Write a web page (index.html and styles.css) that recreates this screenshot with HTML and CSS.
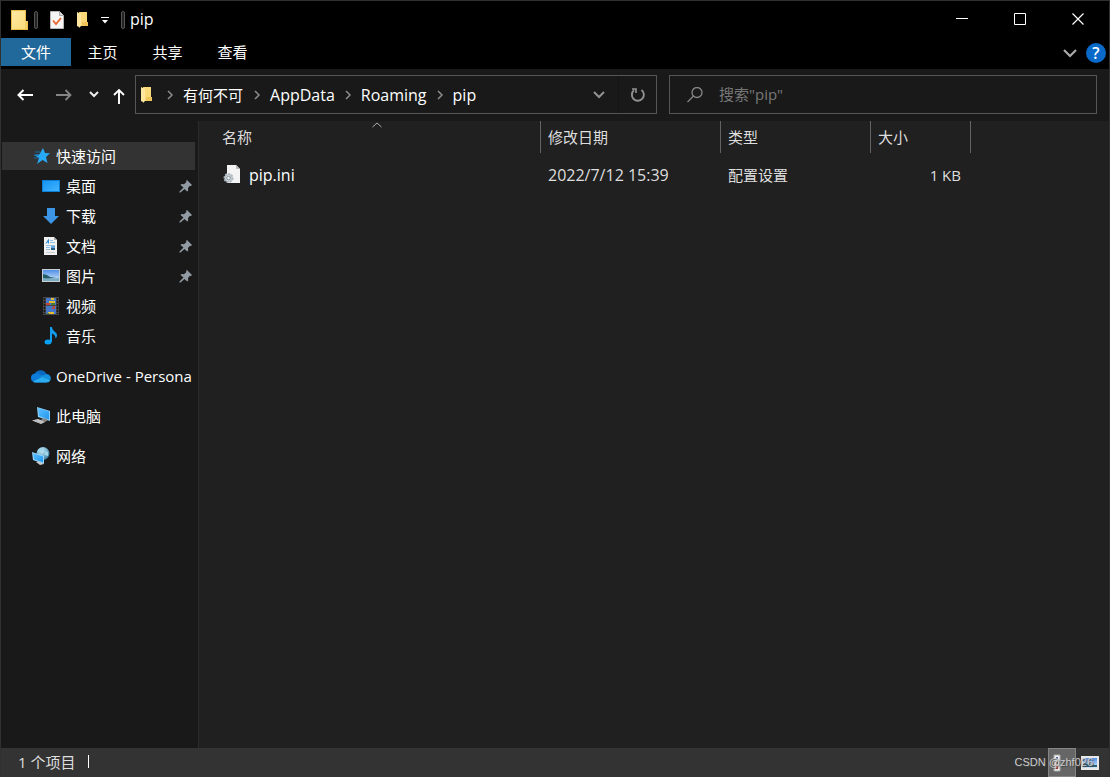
FILE: index.html
```html
<!DOCTYPE html>
<html lang="zh-CN">
<head>
<meta charset="utf-8">
<meta name="viewport" content="width=device-width, initial-scale=1">
<title>pip</title>
<link rel="stylesheet" href="styles.css">
</head>
<body>
<svg class="defs" aria-hidden="true">
  <defs>
    <linearGradient id="gold" x1="0" y1="0" x2="1" y2="1"><stop offset="0" stop-color="#ffe9a2"/><stop offset="1" stop-color="#fbdc7c"/></linearGradient>
    <linearGradient id="blue" x1="0" y1="0" x2="1" y2="1"><stop offset="0" stop-color="#1494f2"/><stop offset="1" stop-color="#42b4ff"/></linearGradient>
    <linearGradient id="screen" x1="0" y1="0" x2="1" y2="1"><stop offset="0" stop-color="#5cc0ff"/><stop offset="1" stop-color="#2196ee"/></linearGradient>
    <linearGradient id="sky" x1="0" y1="0" x2="0" y2="1"><stop offset="0" stop-color="#4f8fe8"/><stop offset="1" stop-color="#d5eafa"/></linearGradient>
    <radialGradient id="globe" cx=".4" cy=".3" r=".8"><stop offset="0" stop-color="#c8e8f4"/><stop offset=".5" stop-color="#79b4cf"/><stop offset="1" stop-color="#2b6c94"/></radialGradient>
    <symbol id="folder" viewBox="0 0 13 17"><path d="M3 1h8v10h1v4H3z" fill="#eec45b"/><path d="M4 1h7v10H6v4H4z" fill="#f9d978"/><path d="M1 1l4 2v12l-2 2v-1l-2-1z" fill="#ffe7a0"/></symbol>
    <symbol id="pin" viewBox="0 0 14 14"><path d="M8 1l5 5-1 1-1-.3-2 2.300.2 2.500-1 1L5.500 10 1.500 13.500.5 13.500.5 12.500 4.500 8.500 1.500 6l1-1L5 5.200 7.500 3 7 2z" fill="#929ba3"/></symbol>
    <symbol id="crumb" viewBox="0 0 8 10"><path d="M2 1l4 4-4 4" fill="none" stroke="#8c8c8c" stroke-width="1.500"/></symbol>
  </defs>
</svg>
<div class="window">
  <header class="titlebar">
    <svg class="app-icon" viewBox="0 0 18 20"><path d="M0 0h15v11h2v9H0z" fill="#e9bd46"/><path d="M1 1h13v18H1z" fill="url(#gold)"/><path d="M14 11h2v8h-2z" fill="#f5d068"/></svg>
    <span class="grip"></span>
    <button class="quick" aria-label="属性"><svg width="14" height="18" viewBox="0 0 14 18"><path d="M.5.5h9l4 4v13H.5z" fill="#f5f5f5" stroke="#b5b5b5"/><path d="M9.500.5v4h4" fill="#ddd" stroke="#aaa"/><path d="M3 9.500l3 3.500 5-6" fill="none" stroke="#e9662c" stroke-width="1.800"/></svg></button>
    <button class="quick" aria-label="新建文件夹"><svg width="13" height="17"><use href="#folder"/></svg></button>
    <button class="quick quick-more" aria-label="自定义快速访问工具栏"><svg width="8" height="8" viewBox="0 0 8 8"><path d="M0 1h8v1H0zM1 4h6L4 7.500z" fill="#fff"/></svg></button>
    <span class="grip"></span>
    <h1 class="title">pip</h1>
    <div class="controls">
      <button aria-label="最小化"><svg width="12" height="12" viewBox="0 0 12 12"><path d="M0 5.500h12" stroke="#fff"/></svg></button>
      <button aria-label="最大化"><svg width="12" height="12" viewBox="0 0 12 12"><path d="M.5.5h11v11H.5z" fill="none" stroke="#fff"/></svg></button>
      <button aria-label="关闭"><svg width="12" height="12" viewBox="0 0 12 12"><path d="M.5.5l11 11M11.500.5l-11 11" stroke="#fff" stroke-width="1.200"/></svg></button>
    </div>
  </header>
  <nav class="ribbon">
    <button class="tab tab-file">文件</button>
    <button class="tab">主页</button>
    <button class="tab">共享</button>
    <button class="tab">查看</button>
    <div class="ribbon-end">
      <button aria-label="展开功能区"><svg width="14" height="9" viewBox="0 0 14 9"><path d="M1 1l6 6 6-6" fill="none" stroke="#aaa" stroke-width="2.200"/></svg></button>
      <button class="help" aria-label="帮助">?</button>
    </div>
  </nav>
  <div class="toolbar">
    <div class="history">
      <button class="nav-side" aria-label="后退"><svg width="16" height="12" viewBox="0 0 16 12"><path d="M16 6H1.500M6.500 1l-5 5 5 5" fill="none" stroke="#fff" stroke-width="2"/></svg></button>
      <button class="nav-side" aria-label="前进"><svg width="16" height="12" viewBox="0 0 16 12"><path d="M0 6h14.500M9.500 1l5 5-5 5" fill="none" stroke="#858585" stroke-width="1.800"/></svg></button>
      <button class="nav-recent" aria-label="最近浏览的位置"><svg width="10" height="7" viewBox="0 0 10 7"><path d="M1 1l4 4 4-4" fill="none" stroke="#eee" stroke-width="2"/></svg></button>
      <button class="nav-up" aria-label="上移"><svg width="12" height="16" viewBox="0 0 12 16"><path d="M6 16V2M1 7l5-5 5 5" fill="none" stroke="#fff" stroke-width="1.900"/></svg></button>
    </div>
    <div class="address">
      <svg width="13" height="17"><use href="#folder"/></svg>
      <svg class="crumb crumb-first" width="8" height="10"><use href="#crumb"/></svg>
      <a class="cn" href="#home">有何不可</a>
      <svg class="crumb" width="8" height="10"><use href="#crumb"/></svg>
      <a href="#appdata">AppData</a>
      <svg class="crumb" width="8" height="10"><use href="#crumb"/></svg>
      <a href="#roaming">Roaming</a>
      <svg class="crumb" width="8" height="10"><use href="#crumb"/></svg>
      <a href="#pip">pip</a>
      <div class="address-end">
        <button class="addr-button" aria-label="以前的位置"><svg width="12" height="8" viewBox="0 0 12 8"><path d="M1 1l5 5 5-5" fill="none" stroke="#929292" stroke-width="2"/></svg></button>
        <button class="addr-button addr-refresh" aria-label="刷新"><svg width="16" height="16" viewBox="0 0 16 16"><path d="M11.500 3A6 6 0 1 1 4 3.200" fill="none" stroke="#929292" stroke-width="1.900"/><path d="M2 2h4v4" fill="none" stroke="#929292" stroke-width="1.600"/></svg></button>
      </div>
    </div>
    <label class="search">
      <svg width="16" height="16" viewBox="0 0 16 16"><circle cx="10" cy="5.500" r="5" fill="none" stroke="#858585" stroke-width="1.300"/><path d="M6.500 9L.5 15" stroke="#858585" stroke-width="1.300"/></svg>
      <input type="text" aria-label="搜索" placeholder='搜索"pip"'>
    </label>
  </div>
  <div class="body">
    <aside class="sidebar">
      <a class="item selected" href="#quick"><svg width="18" height="18" viewBox="0 0 18 18"><path d="M10 1l2 5 5 .3-4 3.700 1.500 6-5-3-5.500 4 2-6L1 8l5.500-.7z" fill="#27a9f5"/><path d="M2 5h5M1 8h5M1 11h4" stroke="#136ca5"/></svg>快速访问</a>
      <a class="item sub" href="#desktop"><svg width="18" height="18" viewBox="0 0 18 18"><path d="M0 3h18v12H0z" fill="#0d7ed5"/><path d="M1 4h16v10H1z" fill="url(#blue)"/></svg>桌面<svg class="pin" width="14" height="14"><use href="#pin"/></svg></a>
      <a class="item sub" href="#downloads"><svg width="18" height="18" viewBox="0 0 18 18"><path d="M5 1h8v8h4l-8 8-8-8h4z" fill="#3d96e5"/></svg>下载<svg class="pin" width="14" height="14"><use href="#pin"/></svg></a>
      <a class="item sub" href="#documents"><svg width="18" height="18" viewBox="0 0 18 18"><path d="M2 0h10l3 3v15H2z" fill="#f1f1f1"/><path d="M12 0v3h3" fill="#aaa"/><path d="M4 6.500l2.500-4v4M5 5h2" fill="none" stroke="#2f8bd0"/><path d="M8 3.500h3M8 5.500h5M4 8.500h9M4 10.500h4M4 12.500h4" stroke="#8fbfe6"/><path d="M4 15.500h9" stroke="#ccc"/><path d="M9 9h4v2H9z" fill="#64a5e2"/><path d="M9 11h4v2H9z" fill="#285f83"/></svg>文档<svg class="pin" width="14" height="14"><use href="#pin"/></svg></a>
      <a class="item sub" href="#pictures"><svg width="18" height="18" viewBox="0 0 18 18"><path d="M0 2h18v13H0z" fill="#c9ced0"/><path d="M1 3h16v11H1z" fill="url(#sky)"/><path d="M1 7l4 1 3 2 6 1-13 1z" fill="#245f68"/><path d="M1 11l6 1 10-1v3H1z" fill="#79abc2"/></svg>图片<svg class="pin" width="14" height="14"><use href="#pin"/></svg></a>
      <a class="item sub" href="#videos"><svg width="18" height="18" viewBox="0 0 18 18"><path d="M1 0h16v18H1z" fill="#484848"/><path d="M2.500 1v16M15.500 1v16" stroke="#151515" stroke-width="1.500" stroke-dasharray="2 1"/><path d="M4 1h10v7H4zM4 9h10v8H4z" fill="#4678ca"/><path d="M9 1h3v2H9zM7 4h6v2H7zM6 15h6v2H6z" fill="#e0bd35"/><path d="M4 6h4v2H4zM11 9h2v3h-3z" fill="#c0453a"/><path d="M9 6h4v2H9zM5 16h2v1H5z" fill="#4a7a3b"/></svg>视频</a>
      <a class="item sub" href="#music"><svg width="18" height="18" viewBox="0 0 18 18"><ellipse cx="6" cy="15" rx="3.500" ry="2.500" fill="#09a1f5"/><path d="M8 0h2c0 4 5 5 5 8 0 1.500-.5 2.500-1.500 3.500 0-3-1.500-4-3.500-5V15H8z" fill="#119ced"/></svg>音乐</a>
      <a class="item root" href="#onedrive"><svg width="20" height="18" viewBox="0 0 20 18"><path d="M4.500 15.500A4.500 4.500 0 0 1 4 6.500 6.500 6.500 0 0 1 15.500 7a4.500 4.500 0 0 1 0 8.500z" fill="#0a68c0"/><path d="M4.500 6.500c4-1 6 2 8 3l-9.500 5C-1 12 0 7 4.500 6.500z" fill="#0c7cd8"/><path d="M9 9.500l6.500-2.500a4.300 4.300 0 0 1 4 6z" fill="#1490df"/><path d="M2 14.500l9-4.500 8.500 3c-.8 1.700-2 2.500-4 2.500h-11c-1 0-2-.5-2.500-1z" fill="#2bacef"/></svg>OneDrive - Persona</a>
      <a class="item root" href="#computer"><svg width="20" height="20" viewBox="0 0 20 20"><path d="M6 1l13 4v10L7 11z" fill="#8ed2fb"/><path d="M7 2l11 3.500v8L8 10z" fill="url(#screen)"/><path d="M9 14l5-2 3 2-3 2z" fill="#888"/><path d="M1 14.500l6-1.500 7 3-4 2z" fill="#d4d4d4"/><path d="M3 14.500l7 2.500M5 14l7 2.500" stroke="#a2a2a2" stroke-width=".6"/></svg>此电脑</a>
      <a class="item root" href="#network"><svg width="20" height="20" viewBox="0 0 20 20"><circle cx="12" cy="7.500" r="6.500" fill="url(#globe)"/><path d="M7 4q3-3 6-2l-2 3-4 1zM14 5l3 1v4l-3-1z" fill="#a3d5e8"/><path d="M1 6l12 4v8L2 14z" fill="#9ad8fb"/><path d="M2 7.200l10 3.300v6L3 13.300z" fill="url(#screen)"/><path d="M5 16l3-.5 5 2.500-4 1z" fill="#ccc"/></svg>网络</a>
    </aside>
    <main class="content">
      <table class="files">
        <thead>
          <tr>
            <th class="col-name">名称<svg class="sort" width="10" height="6" viewBox="0 0 10 6"><path d="M.5 5L5 1l4.500 4" fill="none" stroke="#aaa"/></svg></th>
            <th class="col-date">修改日期</th>
            <th class="col-type">类型</th>
            <th class="col-size">大小</th>
            <td></td>
          </tr>
        </thead>
        <tbody>
          <tr>
            <td class="name"><div class="file"><svg width="18" height="20" viewBox="0 0 18 20"><path d="M4 0h9l4 4v14H4z" fill="#f4f4f4"/><path d="M13 0v4h4" fill="#b8bdc0"/><circle cx="5.500" cy="13" r="4" fill="#cbd3d8" stroke="#aab6bd" stroke-width="2" stroke-dasharray="2 1"/><circle cx="5.500" cy="13" r="1.800" fill="#edf1f2" stroke="#8b989f"/></svg><span class="latin">pip.ini</span></div></td>
            <td class="latin">2022/7/12 15:39</td>
            <td>配置设置</td>
            <td class="size">1 KB</td>
            <td></td>
          </tr>
        </tbody>
      </table>
    </main>
  </div>
  <footer class="status">
    <span class="count">1 个项目</span>
    <div class="views">
      <button class="view active" aria-label="详细信息"><svg width="8" height="18" viewBox="0 0 8 18"><path d="M1 1h6v16H1z" fill="#f0f0f0" stroke="#aaa"/><path d="M3 3h2v2H3z" fill="#496a9c"/><path d="M3 8h2v2H3z" fill="#555"/><path d="M3 12h2v3H3z" fill="#c42c2c"/></svg></button>
      <button class="view" aria-label="大缩略图"><svg width="18" height="14" viewBox="0 0 18 14"><path d="M0 0h18v14H0z" fill="#e8e8e8"/><path d="M2 2h14v10H2z" fill="url(#sky)"/><path d="M2 7l5 1 4 1h5v2H2z" fill="#285d78"/></svg></button>
    </div>
    <span class="watermark">CSDN @zhf026</span>
  </footer>
</div>
</body>
</html>
```
FILE: styles.css
```css
* { box-sizing: border-box; }
body {
  margin: 0;
  background: #191919;
  color: #fff;
  font: 15px/20px "Open Sans", "Noto Sans CJK SC", sans-serif;
}
button {
  display: flex;
  align-items: center;
  justify-content: center;
  padding: 0;
  border: 0;
  background: none;
  color: inherit;
  font: inherit;
}
a { color: inherit; text-decoration: none; }
svg { display: block; flex: none; }
.defs { position: absolute; width: 0; height: 0; }
.latin { font-size: 16px; }

.window {
  display: flex;
  flex-direction: column;
  min-height: 100vh;
  border: 1px solid #303030;
  border-bottom: 0;
}

.titlebar {
  display: flex;
  align-items: center;
  height: 37px;
  padding-left: 10px;
  background: #000;
}
.app-icon { width: 18px; height: 20px; margin-right: 5px; }
.grip {
  width: 4px;
  height: 18px;
  border: 1px solid #555;
  border-radius: 2px;
  background: #222;
}
.quick { margin-left: 12px; }
.quick-more { margin-right: 12px; }
.title { margin: 0 0 0 5px; padding-bottom: 2px; font-size: 16px; font-weight: 400; }
.controls {
  display: flex;
  align-self: stretch;
  margin-left: auto;
  padding: 0 2px 1px 0;
}
.controls button { width: 58px; }

.ribbon { display: flex; height: 31px; padding-bottom: 3px; background: #000; }
.tab { width: 65px; padding-right: 2px; }
.tab-file { width: 70px; padding-right: 0; background: #22699b; }
.ribbon-end {
  display: flex;
  align-items: center;
  gap: 9px;
  margin-left: auto;
  padding: 2px 3px 0 0;
}
.help {
  width: 20px;
  height: 20px;
  border-radius: 50%;
  background: #0869c9;
  font-size: 16px;
  font-weight: 600;
}

.toolbar {
  display: flex;
  height: 52px;
  padding: 6px 12px 7px 0;
}
.history { display: flex; flex: none; width: 134px; padding-left: 4px; }
.nav-side { width: 39px; }
.nav-recent { width: 21px; }
.nav-up { width: 29px; padding-top: 2px; }
.address, .search {
  display: flex;
  align-items: center;
  min-width: 0;
  border: 1px solid #555;
}
.address {
  flex: 516 1 0;
  padding-left: 4px;
  font-size: 16px;
  white-space: nowrap;
}
.address .cn { font-size: 15px; }
.crumb { margin: 0 9px; }
.crumb-first { margin-left: 13px; }
.cn + .crumb { margin-left: 10px; }
.address-end { display: flex; align-self: stretch; margin-left: auto; }
.addr-button { width: 38px; }
.addr-refresh { border-left: 1px solid #141414; }
.search { flex: 409 1 0; gap: 16px; margin-left: 12px; padding-left: 17px; }
.search input {
  flex: 1;
  min-width: 0;
  padding: 0 0 2px;
  border: 0;
  outline: 0;
  background: none;
  color: #fff;
  font: inherit;
}
.search input::placeholder { color: #777; opacity: 1; }

.body { display: flex; flex: 1; }
.sidebar {
  display: flex;
  flex: none;
  flex-direction: column;
  gap: 2px;
  width: 198px;
  padding: 21px 3px 0 1px;
  border-right: 1px solid #2b2b2b;
}
.item {
  display: flex;
  align-items: center;
  gap: 5px;
  height: 28px;
  padding-left: 31px;
  white-space: nowrap;
}
.selected { background: #333; }
.sub { gap: 6px; padding-left: 40px; }
.root { margin-top: 10px; padding-left: 29px; }
.pin { margin: 0 2px 0 auto; }

.content { flex: 1; min-width: 0; background: #202020; }
.files {
  width: 100%;
  border-collapse: separate;
  border-spacing: 0;
  table-layout: fixed;
  color: #dedede;
}
.files th {
  position: relative;
  height: 32px;
  padding: 0 7px;
  border-right: 1px solid #636363;
  font-weight: 400;
  text-align: left;
}
.files td { height: 44px; padding: 0 7px; }
.files thead td { height: 32px; }
.files .col-name { width: 342px; padding-left: 23px; }
.col-date { width: 180px; }
.col-type { width: 150px; }
.col-size { width: 100px; }
.files .name { padding-left: 24px; color: #fff; }
.files .size { padding-right: 10px; text-align: right; }
.file { display: flex; align-items: center; gap: 8px; }
.sort { position: absolute; top: 1px; left: calc(50% + 2px); }

.status {
  position: relative;
  display: flex;
  align-items: center;
  height: 29px;
  padding-left: 17px;
  background: #333;
  color: #dedede;
}
.count { display: flex; align-items: center; gap: 13px; padding-bottom: 2px; }
.count::after { width: 1px; height: 13px; background: #fff; content: ""; }
.views { display: flex; align-self: stretch; margin-left: auto; padding-right: 5px; }
.view { width: 28px; }
.active {
  justify-content: flex-start;
  padding-left: 4px;
  border: 1px solid #858585;
  background: #666;
}
.watermark {
  position: absolute;
  top: 4px;
  right: 16px;
  color: #ccc;
  font: 11px/20px "Liberation Sans", Arial, sans-serif;
  text-shadow: 1px 1px 1px #444;
  pointer-events: none;
}
```
